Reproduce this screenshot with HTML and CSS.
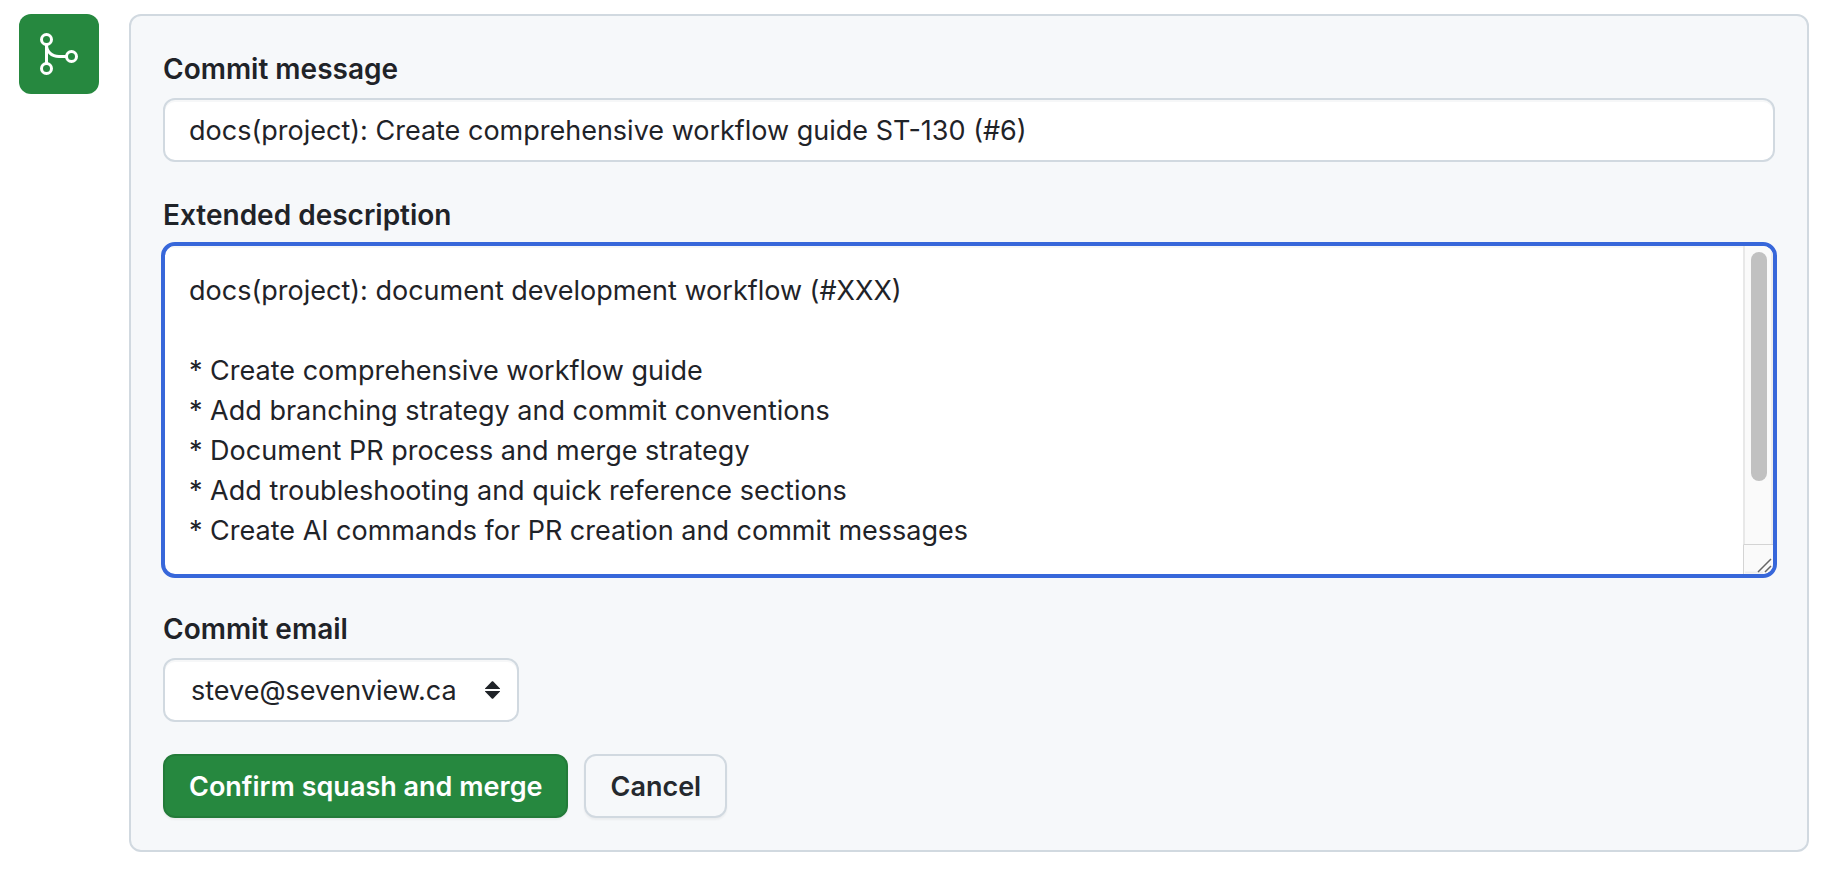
FILE: index.html
```html
<!DOCTYPE html>
<html lang="en">
<head>
<meta charset="utf-8">
<meta name="viewport" content="width=device-width, initial-scale=1">
<title>Confirm squash and merge</title>
<link rel="stylesheet" href="styles.css">
</head>
<body>
<main class="merge">
  <div class="merge-badge">
    <svg class="merge-icon" viewBox="0 0 48 48" fill="none" stroke="currentColor" stroke-width="3" aria-hidden="true">
      <circle cx="11.5" cy="9.5" r="5"/>
      <circle cx="11.5" cy="38.5" r="5"/>
      <circle cx="36.5" cy="26.5" r="5"/>
      <path d="M11.5 14.5v19M11.5 14.5c0 7 5 12 12.500 12h8"/>
    </svg>
  </div>
  <form class="panel">
    <div class="field">
      <label class="label" for="message">Commit message</label>
      <input class="control" id="message" type="text" value="docs(project): Create comprehensive workflow guide ST-130 (#6)">
    </div>
    <div class="field">
      <label class="label" for="description">Extended description</label>
      <div class="editor">
        <textarea class="description" id="description" rows="7">docs(project): document development workflow (#XXX)

* Create comprehensive workflow guide
* Add branching strategy and commit conventions
* Document PR process and merge strategy
* Add troubleshooting and quick reference sections
* Create AI commands for PR creation and commit messages

</textarea>
        <div class="scrollbar" aria-hidden="true">
          <div class="scrollbar-track"><div class="scrollbar-thumb"></div></div>
          <svg class="grip" viewBox="0 0 30 30" fill="none">
            <path d="M.5 30V.5H30" stroke="#d4d4d4"/>
            <path d="M2 28.500h18" stroke="#ededed" stroke-width="2"/>
            <path d="M15 28 28 15M22 28l6-6" stroke="#666" stroke-width="1.500"/>
          </svg>
        </div>
      </div>
    </div>
    <div class="field">
      <label class="label" for="email">Commit email</label>
      <select class="control email" id="email">
        <option>steve@sevenview.ca</option>
      </select>
    </div>
    <div class="actions">
      <button class="button button-primary" type="submit">Confirm squash and merge</button>
      <button class="button" type="button">Cancel</button>
    </div>
  </form>
</main>
</body>
</html>
```

FILE: styles.css
```css
* {
  box-sizing: border-box;
}

body {
  margin: 0;
  background: #fff;
  color: #1f2328;
  font-family: Inter, "Liberation Sans", sans-serif;
  font-size: 27px;
  line-height: 40px;
}

.merge {
  display: flex;
  align-items: flex-start;
  gap: 30px;
  padding: 14px 27px 20px 19px;
}

.merge-badge {
  display: flex;
  flex: none;
  padding: 16px;
  border-radius: 12px;
  background: #26883f;
  color: #fff;
}

.merge-icon {
  width: 48px;
  height: 48px;
}

.panel {
  display: flex;
  flex: 1;
  flex-direction: column;
  gap: 32px;
  min-width: 0;
  padding: 32px;
  border: 2px solid #d1d9e0;
  border-radius: 12px;
  background: #f6f8fa;
}

.field {
  display: flex;
  flex-direction: column;
  align-items: flex-start;
  gap: 8px;
}

.label {
  font-size: 28px;
  font-weight: 600;
  line-height: 42px;
}

.control {
  display: block;
  width: 100%;
  margin: 0;
  padding: 11px 24px 9px;
  border: 2px solid #d1d9e0;
  border-radius: 12px;
  background: #fff;
  box-shadow: inset 0 2px 0 #f6f7f8;
  color: inherit;
  font: inherit;
  outline: none;
}

.editor {
  display: flex;
  align-self: stretch;
  margin: -2px;
  border: 4px solid #3767da;
  border-radius: 14px;
  background: #fff;
  overflow: hidden;
}

.description {
  display: block;
  flex: 1;
  min-width: 0;
  margin: 0;
  padding: 25px 24px 23px;
  border: 0;
  background: none;
  box-shadow: inset 0 2px 0 #f6f7f8;
  color: inherit;
  font: inherit;
  outline: none;
  overflow-y: auto;
  resize: none;
  scrollbar-width: none;
}

.scrollbar {
  display: flex;
  flex: none;
  flex-direction: column;
  width: 30px;
  background: #fafafa;
}

.scrollbar-track {
  flex: 1;
  padding: 6px;
  border: solid #e8e8e8;
  border-width: 0 2px;
  border-right-color: #ededed;
}

.scrollbar-thumb {
  width: 16px;
  height: 80%;
  border-radius: 8px;
  background: #c1c1c1;
}

.grip {
  width: 30px;
  height: 30px;
}

.email {
  width: auto;
  padding-right: 60px;
  padding-left: 26px;
  appearance: none;
  background: #fff url("data:image/svg+xml,%3Csvg xmlns='http://www.w3.org/2000/svg' width='15' height='18' fill='%231f2328'%3E%3Cpath d='M0 8V7.500L7 .3h1l7 7.200V8zM0 10v.5l7 7.200h1l7-7.200V10z'/%3E%3C/svg%3E") no-repeat right 17px center;
}

.actions {
  display: flex;
  flex-wrap: wrap;
  gap: 16px;
}

.button {
  padding: 11px 24px 9px;
  border: 2px solid #d1d9e0;
  border-radius: 12px;
  background: #f6f8fa;
  box-shadow: 0 2px 2px #1f23280d;
  color: #25292e;
  font: inherit;
  font-weight: 600;
}

.button-primary {
  border-color: #237b39;
  background: #26883f;
  color: #fff;
}
```
